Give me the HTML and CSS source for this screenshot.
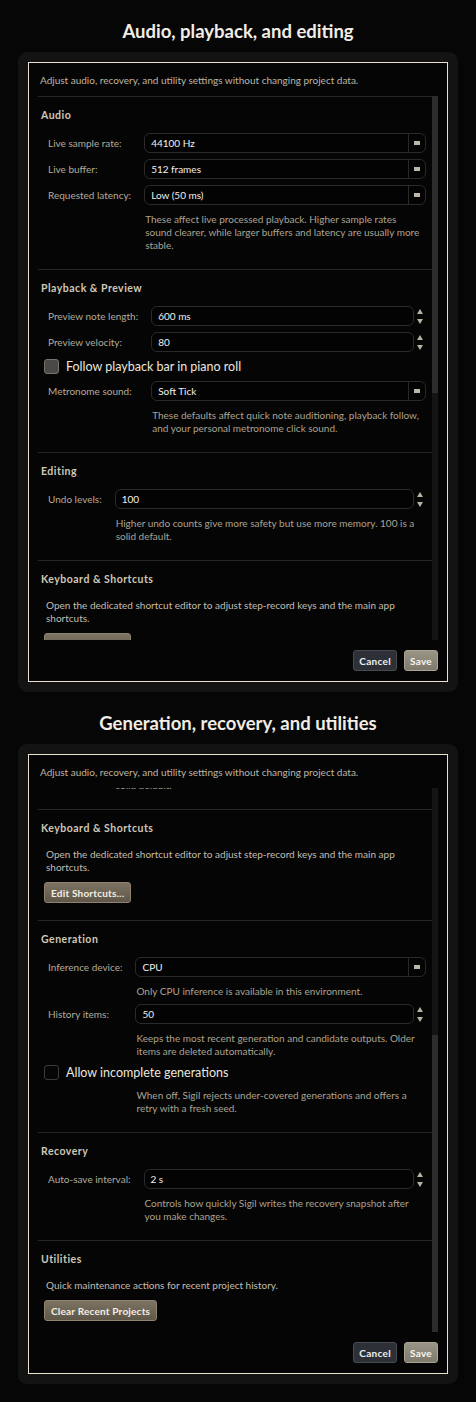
FILE: index.html
```html
<!DOCTYPE html>
<html lang="en">
<head>
    <meta charset="UTF-8">
    <meta name="viewport" content="width=device-width, initial-scale=1.0">
    <title>Settings - Audio, Generation, Recovery</title>
    <link rel="stylesheet" href="styles.css">
</head>
<body>
    <section class="shot">
        <h2 class="shot-title">Audio, playback, and editing</h2>
        <div class="dialog">
            <div class="dialog-inner">
                <p class="intro">Adjust audio, recovery, and utility settings without changing project data.</p>
                <div class="scroll">
                    <div class="viewport">
                        <div class="content">
                            <div class="group">
                                <h3 class="group-title">Audio</h3>
                                <div class="form">
                                    <span class="label">Live sample rate:</span>
                                    <div class="combo"><span class="value">44100 Hz</span><span class="combo-arrow"></span></div>
                                    <span class="label">Live buffer:</span>
                                    <div class="combo"><span class="value">512 frames</span><span class="combo-arrow"></span></div>
                                    <span class="label">Requested latency:</span>
                                    <div class="combo"><span class="value">Low (50 ms)</span><span class="combo-arrow"></span></div>
                                    <p class="hint">These affect live processed playback. Higher sample rates<br>sound clearer, while larger buffers and latency are usually more<br>stable.</p>
                                </div>
                            </div>
                            <div class="group">
                                <h3 class="group-title">Playback &amp; Preview</h3>
                                <div class="form">
                                    <span class="label">Preview note length:</span>
                                    <div class="spin"><span class="spin-box"><span class="value">600 ms</span></span><span class="spin-arrows"><i class="arrow-up"></i><i class="arrow-down"></i></span></div>
                                    <span class="label">Preview velocity:</span>
                                    <div class="spin"><span class="spin-box"><span class="value">80</span></span><span class="spin-arrows"><i class="arrow-up"></i><i class="arrow-down"></i></span></div>
                                    <label class="check-row"><span class="box filled"></span>Follow playback bar in piano roll</label>
                                    <span class="label">Metronome sound:</span>
                                    <div class="combo"><span class="value">Soft Tick</span><span class="combo-arrow"></span></div>
                                    <p class="hint">These defaults affect quick note auditioning, playback follow,<br>and your personal metronome click sound.</p>
                                </div>
                            </div>
                            <div class="group">
                                <h3 class="group-title">Editing</h3>
                                <div class="form">
                                    <span class="label">Undo levels:</span>
                                    <div class="spin"><span class="spin-box"><span class="value">100</span></span><span class="spin-arrows"><i class="arrow-up"></i><i class="arrow-down"></i></span></div>
                                    <p class="hint">Higher undo counts give more safety but use more memory. 100 is a<br>solid default.</p>
                                </div>
                            </div>
                            <div class="group">
                                <h3 class="group-title">Keyboard &amp; Shortcuts</h3>
                                <p class="group-text">Open the dedicated shortcut editor to adjust step-record keys and the main app<br>shortcuts.</p>
                                <button class="action">Edit Shortcuts...</button>
                            </div>
                            <div class="group">
                                <h3 class="group-title">Generation</h3>
                                <div class="form">
                                    <span class="label">Inference device:</span>
                                    <div class="combo"><span class="value">CPU</span><span class="combo-arrow"></span></div>
                                    <p class="hint">Only CPU inference is available in this environment.</p>
                                    <span class="label">History items:</span>
                                    <div class="spin"><span class="spin-box"><span class="value">50</span></span><span class="spin-arrows"><i class="arrow-up"></i><i class="arrow-down"></i></span></div>
                                    <p class="hint">Keeps the most recent generation and candidate outputs. Older<br>items are deleted automatically.</p>
                                    <label class="check-row"><span class="box"></span>Allow incomplete generations</label>
                                    <p class="hint">When off, Sigil rejects under-covered generations and offers a<br>retry with a fresh seed.</p>
                                </div>
                            </div>
                            <div class="group">
                                <h3 class="group-title">Recovery</h3>
                                <div class="form">
                                    <span class="label">Auto-save interval:</span>
                                    <div class="spin"><span class="spin-box"><span class="value">2 s</span></span><span class="spin-arrows"><i class="arrow-up"></i><i class="arrow-down"></i></span></div>
                                    <p class="hint">Controls how quickly Sigil writes the recovery snapshot after<br>you make changes.</p>
                                </div>
                            </div>
                            <div class="group">
                                <h3 class="group-title">Utilities</h3>
                                <p class="group-text">Quick maintenance actions for recent project history.</p>
                                <button class="action">Clear Recent Projects</button>
                            </div>
                        </div>
                    </div>
                    <div class="scrollbar"><div class="thumb" style="margin-top:0;height:297px"></div></div>
                </div>
                <div class="footer">
                    <button class="btn btn-cancel">Cancel</button>
                    <button class="btn btn-save">Save</button>
                </div>
            </div>
        </div>
    </section>

    <section class="shot">
        <h2 class="shot-title">Generation, recovery, and utilities</h2>
        <div class="dialog">
            <div class="dialog-inner">
                <p class="intro">Adjust audio, recovery, and utility settings without changing project data.</p>
                <div class="scroll">
                    <div class="viewport">
                        <div class="content" style="margin-top:-443px">
                            <div class="group">
                                <h3 class="group-title">Audio</h3>
                                <div class="form">
                                    <span class="label">Live sample rate:</span>
                                    <div class="combo"><span class="value">44100 Hz</span><span class="combo-arrow"></span></div>
                                    <span class="label">Live buffer:</span>
                                    <div class="combo"><span class="value">512 frames</span><span class="combo-arrow"></span></div>
                                    <span class="label">Requested latency:</span>
                                    <div class="combo"><span class="value">Low (50 ms)</span><span class="combo-arrow"></span></div>
                                    <p class="hint">These affect live processed playback. Higher sample rates<br>sound clearer, while larger buffers and latency are usually more<br>stable.</p>
                                </div>
                            </div>
                            <div class="group">
                                <h3 class="group-title">Playback &amp; Preview</h3>
                                <div class="form">
                                    <span class="label">Preview note length:</span>
                                    <div class="spin"><span class="spin-box"><span class="value">600 ms</span></span><span class="spin-arrows"><i class="arrow-up"></i><i class="arrow-down"></i></span></div>
                                    <span class="label">Preview velocity:</span>
                                    <div class="spin"><span class="spin-box"><span class="value">80</span></span><span class="spin-arrows"><i class="arrow-up"></i><i class="arrow-down"></i></span></div>
                                    <label class="check-row"><span class="box filled"></span>Follow playback bar in piano roll</label>
                                    <span class="label">Metronome sound:</span>
                                    <div class="combo"><span class="value">Soft Tick</span><span class="combo-arrow"></span></div>
                                    <p class="hint">These defaults affect quick note auditioning, playback follow,<br>and your personal metronome click sound.</p>
                                </div>
                            </div>
                            <div class="group">
                                <h3 class="group-title">Editing</h3>
                                <div class="form">
                                    <span class="label">Undo levels:</span>
                                    <div class="spin"><span class="spin-box"><span class="value">100</span></span><span class="spin-arrows"><i class="arrow-up"></i><i class="arrow-down"></i></span></div>
                                    <p class="hint">Higher undo counts give more safety but use more memory. 100 is a<br>solid default.</p>
                                </div>
                            </div>
                            <div class="group">
                                <h3 class="group-title">Keyboard &amp; Shortcuts</h3>
                                <p class="group-text">Open the dedicated shortcut editor to adjust step-record keys and the main app<br>shortcuts.</p>
                                <button class="action">Edit Shortcuts...</button>
                            </div>
                            <div class="group">
                                <h3 class="group-title">Generation</h3>
                                <div class="form">
                                    <span class="label">Inference device:</span>
                                    <div class="combo"><span class="value">CPU</span><span class="combo-arrow"></span></div>
                                    <p class="hint">Only CPU inference is available in this environment.</p>
                                    <span class="label">History items:</span>
                                    <div class="spin"><span class="spin-box"><span class="value">50</span></span><span class="spin-arrows"><i class="arrow-up"></i><i class="arrow-down"></i></span></div>
                                    <p class="hint">Keeps the most recent generation and candidate outputs. Older<br>items are deleted automatically.</p>
                                    <label class="check-row"><span class="box"></span>Allow incomplete generations</label>
                                    <p class="hint">When off, Sigil rejects under-covered generations and offers a<br>retry with a fresh seed.</p>
                                </div>
                            </div>
                            <div class="group">
                                <h3 class="group-title">Recovery</h3>
                                <div class="form">
                                    <span class="label">Auto-save interval:</span>
                                    <div class="spin"><span class="spin-box"><span class="value">2 s</span></span><span class="spin-arrows"><i class="arrow-up"></i><i class="arrow-down"></i></span></div>
                                    <p class="hint">Controls how quickly Sigil writes the recovery snapshot after<br>you make changes.</p>
                                </div>
                            </div>
                            <div class="group">
                                <h3 class="group-title">Utilities</h3>
                                <p class="group-text">Quick maintenance actions for recent project history.</p>
                                <button class="action">Clear Recent Projects</button>
                            </div>
                        </div>
                    </div>
                    <div class="scrollbar"><div class="thumb" style="margin-top:247px;height:297px"></div></div>
                </div>
                <div class="footer">
                    <button class="btn btn-cancel">Cancel</button>
                    <button class="btn btn-save">Save</button>
                </div>
            </div>
        </div>
    </section>
</body>
</html>
```

FILE: styles.css
```css
* {
    box-sizing: border-box;
}
body {
    margin: 0;
    background: #060606;
    font-family: Lato, "Open Sans", sans-serif;
    font-size: 10px;
    color: #b3ab9b;
}
.shot {
    padding-top: 20px;
}
.shot-title {
    margin: 0 0 10px;
    font-size: 18.5px;
    line-height: 22px;
    font-weight: 700;
    text-align: center;
    color: #f1ede5;
}
.dialog {
    margin-left: 18px;
    width: 440px;
    height: 640px;
    padding: 10px;
    background: #131313;
    border-radius: 9px;
}
.dialog-inner {
    height: 620px;
    border: 1px solid #e9e1d0;
    background: #050505;
    padding: 10px 9px;
    display: flex;
    flex-direction: column;
}
.intro {
    margin: 0 0 9px 2px;
    line-height: 14px;
    color: #bdb5a6;
}

/* scroll area with a drawn scrollbar */
.scroll {
    display: flex;
    height: 544px;
}
.viewport {
    flex: 1;
    overflow: hidden;
}
.scrollbar {
    width: 6px;
    background: #141414;
}
.thumb {
    background: #2c2c2c;
}

/* groups */
.group {
    border-top: 1px solid #262626;
    padding: 11px 6px 17px 3px;
}
.group-title {
    margin: 0;
    font-size: 10.5px;
    line-height: 14px;
    font-weight: 700;
    letter-spacing: 0.5px;
    color: #d0c8b7;
}
.form {
    margin-top: 11px;
    padding-left: 7px;
    display: grid;
    grid-template-columns: auto 1fr;
    column-gap: 13px;
    row-gap: 6px;
    align-items: center;
}
.label {
    line-height: 20px;
    white-space: nowrap;
}
.value {
    flex: 1;
    padding-left: 6px;
    line-height: 18px;
    color: #f0f0f0;
}
.combo {
    display: flex;
    height: 20px;
    border: 1px solid #2a2a2a;
    border-radius: 6px;
    background: #030303;
}
.combo-arrow {
    width: 17px;
    border-left: 1px solid #2a2a2a;
    display: flex;
    align-items: center;
    justify-content: center;
}
.combo-arrow::before {
    content: "";
    width: 6px;
    height: 4px;
    background: #bdb5a5;
}
.spin {
    display: flex;
    height: 20px;
}
.spin-box {
    flex: 1;
    display: flex;
    border: 1px solid #2a2a2a;
    border-radius: 6px;
    background: #030303;
}
.spin-arrows {
    width: 12px;
    display: flex;
    flex-direction: column;
    align-items: center;
    justify-content: center;
    gap: 5px;
}
.arrow-up, .arrow-down {
    width: 0;
    height: 0;
    border-left: 3.5px solid transparent;
    border-right: 3.5px solid transparent;
}
.arrow-up {
    border-bottom: 5px solid #b9b1a1;
}
.arrow-down {
    border-top: 5px solid #b9b1a1;
}
.hint {
    grid-column: 2;
    margin: 2px 0 0;
    padding-left: 1px;
    line-height: 13px;
    color: #aba392;
    white-space: nowrap;
}
.check-row {
    grid-column: 1 / -1;
    margin-left: -4px;
    height: 17px;
    display: flex;
    align-items: center;
    gap: 7px;
    font-size: 12.5px;
    color: #ebe7df;
}
.box {
    width: 15px;
    height: 15px;
    border-radius: 3px;
    border: 1px solid #3a3a3a;
    background: #060606;
}
.box.filled {
    background: #4b4845;
    border-color: #77736c;
}
.group-text {
    margin: 13px 0 0 5px;
    line-height: 13px;
    color: #c3bdb2;
    white-space: nowrap;
}
.action {
    display: block;
    margin: 8px 0 0 3px;
    height: 21px;
    padding: 0 6px;
    border: 1px solid #8e836f;
    border-radius: 3px;
    background: linear-gradient(#7d7363, #5f5748);
    font-family: inherit;
    font-size: 10px;
    font-weight: 700;
    letter-spacing: 0.2px;
    color: #f4efe6;
}

/* footer */
.footer {
    margin-top: 10px;
    display: flex;
    justify-content: flex-end;
    gap: 7px;
}
.btn {
    height: 21px;
    padding: 0 5px;
    border-radius: 3px;
    font-family: inherit;
    font-size: 10px;
    font-weight: 700;
    letter-spacing: 0.3px;
}
.btn-cancel {
    border: 1px solid #464a52;
    background: #2d3037;
    color: #eef0f2;
}
.btn-save {
    border: 1px solid #aaa495;
    background: linear-gradient(#9a9486, #7f7a6d);
    color: #f8f6f0;
}
```
